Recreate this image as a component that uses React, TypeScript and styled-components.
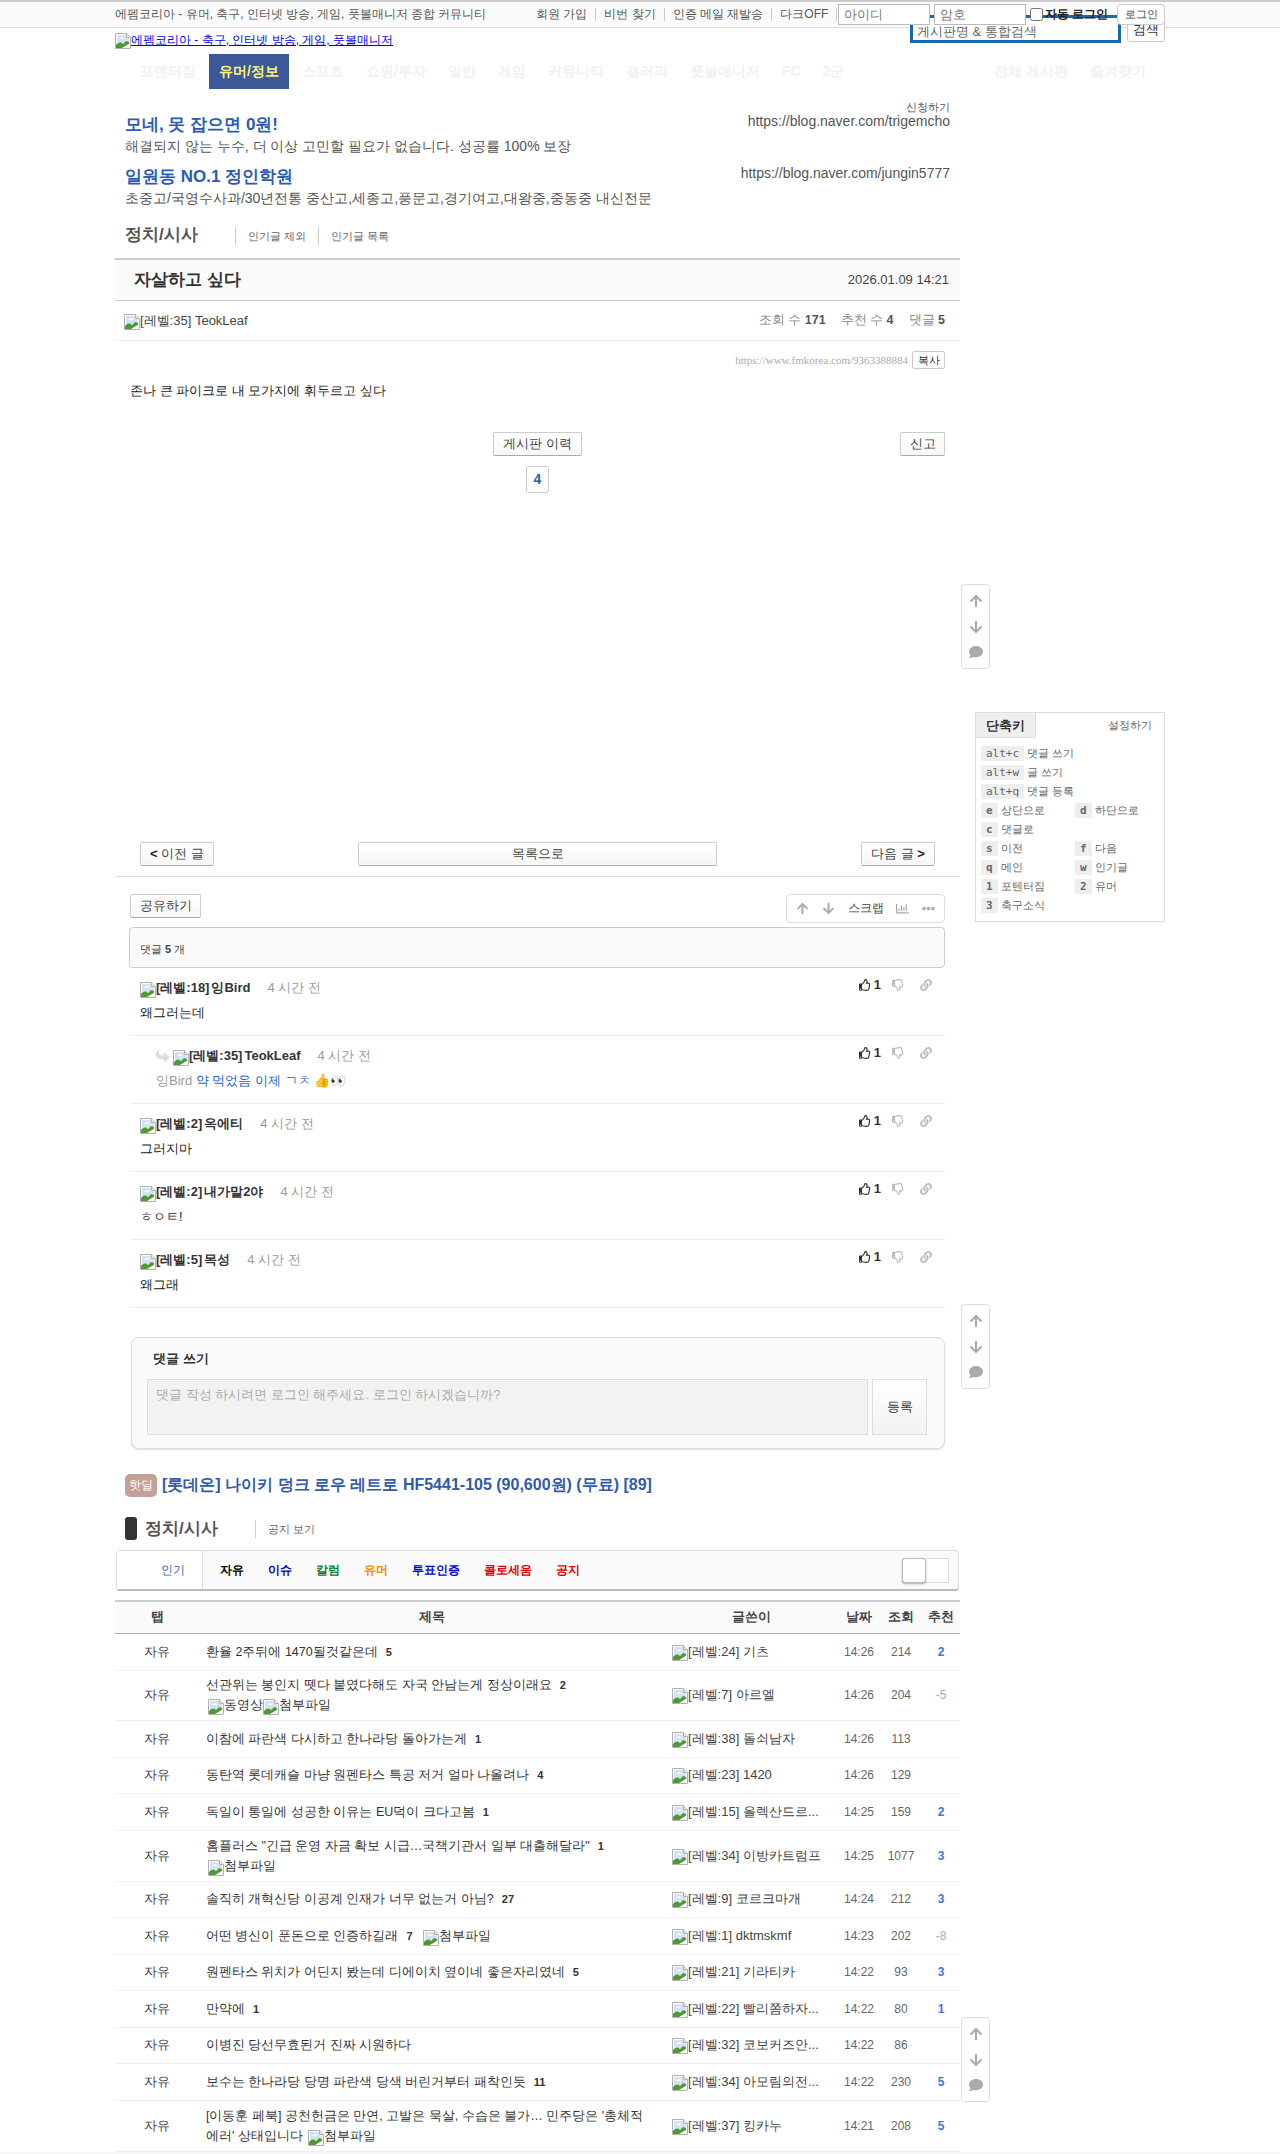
import React from "react";
import styled, { createGlobalStyle } from "styled-components";
import {
  FaArrowUp,
  FaArrowDown,
  FaComment,
  FaRegThumbsUp,
  FaRegThumbsDown,
  FaLink,
  FaRegChartBar,
  FaEllipsisH,
  FaShare,
} from "react-icons/fa";

const GlobalStyle = createGlobalStyle`
  html, body {
    margin: 0;
    padding: 0;
    background: #fff;
    font-family: "Liberation Sans", sans-serif;
    color: #333;
  }
  * { box-sizing: border-box; }
`;

// chrome style placeholder for images that did not load
const Missing = ({ label }: { label: string }) => (
  <MissingWrap>
    <svg width="16" height="16" viewBox="0 0 16 16">
      <path d="M.5 .5h11l4 4v11H.5z" fill="#fff" stroke="#b0b0b0" />
      <path d="M11.5 .5v4h4" fill="#e8e8e8" stroke="#b0b0b0" />
      <path d="M2 2h9v3h3v5H2z" fill="#d5e2f5" />
      <path d="M4 6l3-2 3 2z" fill="#fff" />
      <path d="M1 15v-3c3-3 5-3 7-1l3-3 3 1v2l-7 4z" fill="#4d9a35" />
      <path d="M8 15l6-4v4z" fill="#fff" />
    </svg>
    {label}
  </MissingWrap>
);

const navItems = ["스포츠", "쇼핑/투자", "일반", "게임", "커뮤니티", "갤러리", "풋볼매니저", "FC", "2군"];

const keysWide = [
  ["alt+c", "댓글 쓰기"],
  ["alt+w", "글 쓰기"],
  ["alt+q", "댓글 등록"],
];
const keysGrid = [
  ["e", "상단으로"],
  ["d", "하단으로"],
  ["c", "댓글로"],
  ["", ""],
  ["s", "이전"],
  ["f", "다음"],
  ["q", "메인"],
  ["w", "인기글"],
  ["1", "포텐터짐"],
  ["2", "유머"],
  ["3", "축구소식"],
];

const comments = [
  { level: "18", name: "잉Bird", text: "왜그러는데" },
  { level: "35", name: "TeokLeaf", reply: true, text: "약 먹었음 이제 ㄱㅊ 👍👀" },
  { level: "2", name: "옥에티", text: "그러지마" },
  { level: "2", name: "내가말2야", text: "ㅎㅇㅌ!" },
  { level: "5", name: "목성", text: "왜그래" },
];

const tabs = [
  ["자유", "#000"],
  ["이슈", "#0000c0"],
  ["칼럼", "#0a7d3c"],
  ["유머", "#f08c00"],
  ["투표인증", "#0000d8"],
  ["콜로세움", "#e00000"],
  ["공지", "#d80000"],
];

type Row = {
  title: string;
  count?: string;
  video?: boolean;
  file?: boolean;
  level: string;
  author: string;
  time: string;
  views: string;
  votes?: string;
  h: number;
};

const rows: Row[] = [
  { title: "환율 2주뒤에 1470될것같은데", count: "5", level: "24", author: "기츠", time: "14:26", views: "214", votes: "2", h: 37 },
  { title: "선관위는 봉인지 뗏다 붙였다해도 자국 안남는게 정상이래요", count: "2", video: true, file: true, level: "7", author: "아르엘", time: "14:26", views: "204", votes: "-5", h: 50 },
  { title: "이참에 파란색 다시하고 한나라당 돌아가는게", count: "1", level: "38", author: "돌쇠남자", time: "14:26", views: "113", h: 37 },
  { title: "동탄역 롯데캐슬 마냥 원펜타스 특공 저거 얼마 나올려나", count: "4", level: "23", author: "1420", time: "14:26", views: "129", h: 36 },
  { title: "독일이 통일에 성공한 이유는 EU덕이 크다고봄", count: "1", level: "15", author: "올렉산드르...", time: "14:25", views: "159", votes: "2", h: 37 },
  { title: "홈플러스 \"긴급 운영 자금 확보 시급…국책기관서 일부 대출해달라\"", count: "1", file: true, level: "34", author: "이방카트럼프", time: "14:25", views: "1077", votes: "3", h: 51 },
  { title: "솔직히 개혁신당 이공계 인재가 너무 없는거 아님?", count: "27", level: "9", author: "코르크마개", time: "14:24", views: "212", votes: "3", h: 36 },
  { title: "어떤 병신이 푼돈으로 인증하길래", count: "7", file: true, level: "1", author: "dktmskmf", time: "14:23", views: "202", votes: "-8", h: 37 },
  { title: "원펜타스 위치가 어딘지 봤는데 디에이치 옆이네 좋은자리였네", count: "5", level: "21", author: "기라티카", time: "14:22", views: "93", votes: "3", h: 36 },
  { title: "만약에", count: "1", level: "22", author: "빨리쫌하자...", time: "14:22", views: "80", votes: "1", h: 37 },
  { title: "이병진 당선무효된거 진짜 시원하다", level: "32", author: "코보커즈안...", time: "14:22", views: "86", h: 36 },
  { title: "보수는 한나라당 당명 파란색 당색 버린거부터 패착인듯", count: "11", level: "34", author: "아모림의전...", time: "14:22", views: "230", votes: "5", h: 37 },
  { title: "[이동훈 페북] 공천헌금은 만연, 고발은 묵살, 수습은 불가… 민주당은 '총체적 에러' 상태입니다", file: true, level: "37", author: "킹카누", time: "14:21", views: "208", votes: "5", h: 51 },
];

const ScrollWidget = ({ top }: { top: number }) => (
  <Floater $top={top}>
    <FaArrowUp />
    <FaArrowDown />
    <FaComment />
  </Floater>
);

const App = () => {
  return (
    <>
      <GlobalStyle />
      <TopBar>
        <SiteTag>에펨코리아 - 유머, 축구, 인터넷 방송, 게임, 풋볼매니저 종합 커뮤니티</SiteTag>
        <TopLinks>
          <li>회원 가입</li>
          <li>비번 찾기</li>
          <li>인증 메일 재발송</li>
          <li>다크OFF</li>
        </TopLinks>
        <LoginInput placeholder="아이디" />
        <LoginInput placeholder="암호" />
        <AutoLogin>
          <input type="checkbox" />
          자동 로그인
        </AutoLogin>
        <LoginButton>로그인</LoginButton>
      </TopBar>
      <SearchBox>
        <SearchField placeholder="게시판명 & 통합검색" />
        <SearchButton>검색</SearchButton>
      </SearchBox>

      <Page>
        <Logo>
          <Missing label="에펨코리아 - 축구, 인터넷 방송, 게임, 풋볼매니저" />
        </Logo>
        <Nav>
          <NavItem>포텐터짐</NavItem>
          <NavItem $active>유머/정보</NavItem>
          {navItems.map((n) => (
            <NavItem key={n}>{n}</NavItem>
          ))}
          <NavSpacer />
          <NavItem>전체 게시판</NavItem>
          <NavItem>즐겨찾기</NavItem>
        </Nav>

        <Columns>
          <Main>
            <AdBlock>
              <AdApply>신청하기</AdApply>
              <AdRow>
                <div>
                  <AdTitle>모네, 못 잡으면 0원!</AdTitle>
                  <AdDesc>해결되지 않는 누수, 더 이상 고민할 필요가 없습니다. 성공률 100% 보장</AdDesc>
                </div>
                <AdUrl>https://blog.naver.com/trigemcho</AdUrl>
              </AdRow>
              <AdRow>
                <div>
                  <AdTitle>일원동 NO.1 정인학원</AdTitle>
                  <AdDesc>초중고/국영수사과/30년전통 중산고,세종고,풍문고,경기여고,대왕중,중동중 내신전문</AdDesc>
                </div>
                <AdUrl>https://blog.naver.com/jungin5777</AdUrl>
              </AdRow>
            </AdBlock>

            <BoardHead>
              <BoardName>정치/시사</BoardName>
              <BoardLink>인기글 제외</BoardLink>
              <BoardLink>인기글 목록</BoardLink>
            </BoardHead>

            <PostTitle>
              <h1>자살하고 싶다</h1>
              <span>2026.01.09 14:21</span>
            </PostTitle>
            <PostMeta>
              <Missing label="[레벨:35] TeokLeaf" />
              <Stats>
                <span>
                  조회 수 <b>171</b>
                </span>
                <span>
                  추천 수 <b>4</b>
                </span>
                <span>
                  댓글 <b>5</b>
                </span>
              </Stats>
            </PostMeta>
            <UrlRow>
              <a>https://www.fmkorea.com/9363388884</a>
              <CopyButton>복사</CopyButton>
            </UrlRow>
            <PostBody>존나 큰 파이크로 내 모가지에 휘두르고 싶다</PostBody>
            <PostActions>
              <GrayButton>게시판 이력</GrayButton>
              <ReportButton>신고</ReportButton>
            </PostActions>
            <VoteBox>4</VoteBox>

            <PagerRow>
              <GrayButton $w={74}>
                <b>&lt;</b> 이전 글
              </GrayButton>
              <GrayButton $w={359}>목록으로</GrayButton>
              <GrayButton $w={74}>
                다음 글 <b>&gt;</b>
              </GrayButton>
            </PagerRow>

            <ShareRow>
              <GrayButton $w={71}>공유하기</GrayButton>
              <ToolBox>
                <FaArrowUp />
                <FaArrowDown />
                <span>스크랩</span>
                <FaRegChartBar />
                <FaEllipsisH />
              </ToolBox>
            </ShareRow>
            <CommentCount>
              댓글 <b>5</b> 개
            </CommentCount>

            {comments.map((c, i) => (
              <CommentRow key={i} $reply={c.reply}>
                <div>
                  <CommentHead>
                    {c.reply && <ReplyIcon />}
                    <Missing label={`[레벨:${c.level}]`} /> {c.name}
                    <TimeAgo>4 시간 전</TimeAgo>
                  </CommentHead>
                  <CommentText>
                    {c.reply ? (
                      <>
                        <Mention>잉Bird</Mention> <ReplyBlue>{c.text}</ReplyBlue>
                      </>
                    ) : (
                      c.text
                    )}
                  </CommentText>
                </div>
                <CommentVotes>
                  <FaRegThumbsUp />
                  <b>1</b>
                  <DimIcon>
                    <FaRegThumbsDown />
                  </DimIcon>
                  <DimIcon>
                    <FaLink />
                  </DimIcon>
                </CommentVotes>
              </CommentRow>
            ))}

            <WriteBox>
              <WriteTitle>댓글 쓰기</WriteTitle>
              <WriteRow>
                <WriteArea placeholder="댓글 작성 하시려면 로그인 해주세요. 로그인 하시겠습니까?" readOnly />
                <SubmitButton>등록</SubmitButton>
              </WriteRow>
            </WriteBox>

            <HotDeal>
              <HotBadge>핫딜</HotBadge>
              <a>[롯데온] 나이키 덩크 로우 레트로 HF5441-105 (90,600원) (무료) [89]</a>
            </HotDeal>

            <ListHead>
              <ListMark />
              <ListName>정치/시사</ListName>
              <BoardLink>공지 보기</BoardLink>
            </ListHead>

            <TabBar>
              <PopularTab>인기</PopularTab>
              <TabList>
                {tabs.map(([t, color]) => (
                  <Tab key={t} $color={color}>
                    {t}
                  </Tab>
                ))}
              </TabList>
              <Toggle>
                <i />
              </Toggle>
            </TabBar>

            <BoardTable>
              <colgroup>
                <col width="84" />
                <col width="466" />
                <col width="173" />
                <col width="42" />
                <col width="42" />
                <col width="38" />
              </colgroup>
              <thead>
                <tr>
                  <th>탭</th>
                  <th>제목</th>
                  <th>글쓴이</th>
                  <th>날짜</th>
                  <th>조회</th>
                  <th>추천</th>
                </tr>
              </thead>
              <tbody>
                {rows.map((r, i) => (
                  <BoardRow key={i} $h={r.h}>
                    <td>자유</td>
                    <TitleCell>
                      {r.title}
                      {r.count && <ReplyCount>{r.count}</ReplyCount>}{" "}
                      {(r.video || r.file) && (
                        <Attachments>
                          {r.video && <Missing label="동영상" />}
                          {r.file && <Missing label="첨부파일" />}
                        </Attachments>
                      )}
                    </TitleCell>
                    <AuthorCell>
                      <Missing label={`[레벨:${r.level}]`} /> {r.author}
                    </AuthorCell>
                    <td>{r.time}</td>
                    <td>{r.views}</td>
                    <VoteCell $minus={(r.votes || "").startsWith("-")}>{r.votes}</VoteCell>
                  </BoardRow>
                ))}
              </tbody>
            </BoardTable>
          </Main>

          <Side>
            <ScrollWidget top={495} />
            <ShortcutPanel>
              <ShortcutHead>
                <strong>단축키</strong>
                <span>설정하기</span>
              </ShortcutHead>
              <ShortcutBody>
                {keysWide.map(([k, label]) => (
                  <KeyLine key={k}>
                    <Kbd $plain>{k}</Kbd>
                    {label}
                  </KeyLine>
                ))}
                <KeyGrid>
                  {keysGrid.map(([k, label], i) => (
                    <KeyLine key={i}>
                      {k && <Kbd>{k}</Kbd>}
                      {label}
                    </KeyLine>
                  ))}
                </KeyGrid>
              </ShortcutBody>
            </ShortcutPanel>
            <ScrollWidget top={382} />
            <ScrollWidget top={628} />
          </Side>
        </Columns>
      </Page>
      <PageEnd />
    </>
  );
};

export default App;

const MissingWrap = styled.span`
  display: inline-block;
  white-space: nowrap;
  svg {
    vertical-align: bottom;
  }
`;

const TopBar = styled.div`
  height: 28px;
  display: flex;
  align-items: center;
  padding-left: 115px;
  background: #fafafa;
  border-top: 2px solid #ccc;
  border-bottom: 1px solid #ddd;
  font-size: 12px;
  color: #555;
`;

const SiteTag = styled.div`
  width: 421px;
  white-space: nowrap;
`;

const TopLinks = styled.ul`
  display: flex;
  list-style: none;
  margin: 0;
  padding: 0;
  width: 302px;
  color: #555;
  white-space: nowrap;
  li {
    padding-right: 8px;
    margin-right: 8px;
    border-right: 1px solid #ccc;
    line-height: 13px;
  }
`;

const LoginInput = styled.input`
  position: relative;
  z-index: 2;
  width: 92px;
  height: 21px;
  margin-right: 4px;
  padding: 0 5px;
  border: 1px solid #bbb;
  background: #fff;
  font: 13px "Liberation Sans", sans-serif;
  outline: none;
  &::placeholder {
    color: #777;
  }
`;

const AutoLogin = styled.label`
  position: relative;
  z-index: 2;
  display: flex;
  align-items: center;
  width: 87px;
  font-weight: bold;
  color: #222;
  white-space: nowrap;
  input {
    margin: 0 2px 0 0;
  }
`;

const LoginButton = styled.button`
  position: relative;
  z-index: 2;
  width: 48px;
  height: 21px;
  padding: 0;
  border: 1px solid #ccc;
  border-radius: 4px;
  background: #fff;
  font: 11px "Liberation Sans", sans-serif;
  color: #444;
`;

const SearchBox = styled.div`
  position: absolute;
  z-index: 1;
  top: 15px;
  left: 910px;
  display: flex;
`;

const SearchField = styled.input`
  width: 211px;
  height: 28px;
  padding: 4px 4px 0;
  border: 3px solid #1c64b4;
  font: 13px "Liberation Sans", sans-serif;
  outline: none;
  &::placeholder {
    color: #666;
  }
`;

const SearchButton = styled.button`
  width: 38px;
  height: 27px;
  margin-left: 6px;
  padding: 3px 0 0;
  border: 1px solid #ccc;
  border-radius: 3px;
  background: #fff;
  font: 13px "Liberation Sans", sans-serif;
  color: #333;
`;

const Page = styled.div`
  width: 1165px;
  margin-left: 115px;
`;

const Logo = styled.a`
  display: block;
  height: 26px;
  padding-top: 4px;
  font-size: 12px;
  color: #0000ee;
  span {
    text-decoration: underline;
  }
`;

const Nav = styled.div`
  width: 1042px;
  height: 35px;
  display: flex;
  padding-left: 14px;
`;

const NavItem = styled.div<{ $active?: boolean }>`
  height: 35px;
  line-height: 35px;
  padding: 0 ${(p) => (p.$active ? "10px" : "11px")};
  margin: 0 ${(p) => (p.$active ? "2px" : "0")};
  font-size: 14px;
  font-weight: bold;
  white-space: nowrap;
  background: ${(p) => (p.$active ? "#3b5998" : "transparent")};
  color: ${(p) => (p.$active ? "#fff176" : "#f1f1f1")};
`;

const NavSpacer = styled.div`
  flex: 1;
`;

const Columns = styled.div`
  display: flex;
  align-items: flex-start;
`;

const Main = styled.div`
  width: 845px;
  flex: none;
`;

const Side = styled.div`
  width: 205px;
  flex: none;
`;

const Floater = styled.div<{ $top: number }>`
  width: 29px;
  height: 85px;
  margin: ${(p) => p.$top}px 0 0 1px;
  padding: 9px 0;
  display: flex;
  flex-direction: column;
  align-items: center;
  justify-content: space-between;
  background: #fff;
  border: 1px solid #ddd;
  border-radius: 4px;
  color: #aaa;
  font-size: 14px;
`;

const ShortcutPanel = styled.div`
  width: 190px;
  height: 210px;
  margin: 43px 0 0 15px;
  border: 1px solid #ddd;
  font-size: 11px;
  color: #666;
`;

const ShortcutHead = styled.div`
  display: flex;
  justify-content: space-between;
  align-items: center;
  height: 25px;
  padding-right: 12px;
  strong {
    display: block;
    width: 60px;
    height: 25px;
    line-height: 25px;
    text-align: center;
    background: #eee;
    border-right: 1px solid #ddd;
    border-bottom: 1px solid #ddd;
    font-size: 13px;
    color: #333;
  }
`;

const ShortcutBody = styled.div`
  padding: 6px 5px 0;
`;

const KeyLine = styled.div`
  height: 19px;
  display: flex;
  align-items: center;
  white-space: nowrap;
`;

const Kbd = styled.kbd<{ $plain?: boolean }>`
  margin-right: 3px;
  padding: 0 5px;
  height: 15px;
  background: #eee;
  font: ${(p) => (p.$plain ? "normal" : "bold")} 11px/15px "DejaVu Sans Mono", monospace;
  color: #666;
`;

const KeyGrid = styled.div`
  display: grid;
  grid-template-columns: 94px 1fr;
`;

const AdBlock = styled.div`
  height: 121px;
  padding-top: 12px;
  padding-right: 10px;
`;

const AdApply = styled.div`
  text-align: right;
  font-size: 11px;
  line-height: 12px;
  color: #555;
  margin-bottom: 1px;
`;

const AdRow = styled.div`
  display: flex;
  justify-content: space-between;
  margin-bottom: 8px;
  padding-left: 10px;
`;

const AdTitle = styled.div`
  height: 20px;
  padding-top: 1px;
  font-size: 17px;
  line-height: 20px;
  font-weight: bold;
  color: #2b5bb5;
`;

const AdDesc = styled.div`
  font-size: 14px;
  line-height: 24px;
  color: #555;
`;

const AdUrl = styled.div`
  font-size: 14px;
  line-height: 14px;
  color: #555;
`;

const BoardHead = styled.div`
  height: 50px;
  display: flex;
  align-items: center;
  padding: 0 0 0 10px;
  border-bottom: 2px solid #ccc;
`;

const BoardName = styled.div`
  width: 110px;
  font-size: 17px;
  color: #555;
  font-weight: bold;
`;

const BoardLink = styled.div`
  margin-top: 4px;
  padding: 0 12px;
  height: 18px;
  line-height: 18px;
  border-left: 1px solid #ccc;
  font-size: 11px;
  color: #666;
`;

const PostTitle = styled.div`
  height: 41px;
  padding: 0 11px 2px 19px;
  display: flex;
  justify-content: space-between;
  align-items: center;
  background: #fafafa;
  border-bottom: 1px solid #ccc;
  h1 {
    margin: 0;
    font-size: 17px;
    color: #333;
  }
  span {
    font-size: 13px;
    color: #444;
  }
`;

const PostMeta = styled.div`
  height: 40px;
  display: flex;
  justify-content: space-between;
  align-items: center;
  padding: 0 15px 0 9px;
  border-bottom: 1px solid #eee;
  font-size: 13px;
  color: #444;
`;

const Stats = styled.div`
  display: flex;
  gap: 15px;
  font-size: 12.5px;
  color: #888;
  b {
    color: #555;
  }
`;

const UrlRow = styled.div`
  height: 38px;
  display: flex;
  justify-content: flex-end;
  align-items: center;
  gap: 4px;
  padding-right: 15px;
  font: 11px "Liberation Serif", serif;
  color: #aaa;
`;

const CopyButton = styled.button`
  width: 33px;
  height: 18px;
  padding: 0;
  background: #fff;
  border: 1px solid #ccc;
  border-radius: 2px;
  font: 11px "Liberation Sans", sans-serif;
  color: #333;
`;

const PostBody = styled.div`
  padding-left: 15px;
  height: 53px;
  line-height: 24px;
  padding-top: 0;
  font-size: 13px;
  color: #222;
`;

const PostActions = styled.div`
  position: relative;
  display: flex;
  justify-content: center;
  height: 34px;
`;

const GrayButton = styled.button<{ $w?: number }>`
  width: ${(p) => (p.$w ? `${p.$w}px` : "89px")};
  height: 24px;
  padding: 0;
  background: linear-gradient(#fff, #f6f6f6);
  border: 1px solid #ccc;
  border-bottom-color: #aaa;
  border-radius: 2px;
  font: 13px "Liberation Sans", sans-serif;
  color: #444;
  b {
    color: #222;
  }
`;

const ReportButton = styled(GrayButton)`
  position: absolute;
  right: 15px;
  top: 0;
  width: 45px;
`;

const VoteBox = styled.div`
  width: 23px;
  height: 27px;
  margin: 0 auto;
  line-height: 25px;
  text-align: center;
  border: 1px solid #ccc;
  border-radius: 3px;
  font-size: 14px;
  font-weight: bold;
  color: #2a62b0;
`;

const PagerRow = styled.div`
  display: flex;
  justify-content: space-between;
  height: 35px;
  margin: 349px 0 0;
  padding: 0 25px;
  border-bottom: 1px solid #ddd;
`;

const ShareRow = styled.div`
  display: flex;
  justify-content: space-between;
  align-items: flex-start;
  height: 50px;
  padding: 17px 15px 0;
`;

const ToolBox = styled.div`
  width: 159px;
  height: 29px;
  display: flex;
  align-items: center;
  justify-content: space-between;
  padding: 0 9px;
  border: 1px solid #ddd;
  border-radius: 4px;
  font-size: 12px;
  color: #444;
  svg {
    color: #aaa;
    font-size: 13px;
  }
`;

const CommentCount = styled.div`
  height: 41px;
  margin: 0 15px 0 14px;
  padding: 0 10px;
  line-height: 42px;
  background: #fafafa;
  border: 1px solid #ccc;
  border-radius: 4px;
  font-size: 11px;
  color: #444;
`;

const CommentRow = styled.div<{ $reply?: boolean }>`
  height: 68px;
  margin: 0 15px;
  padding: 10px 13px 0 ${(p) => (p.$reply ? "26px" : "10px")};
  display: flex;
  justify-content: space-between;
  border-bottom: 1px solid #eee;
`;

const CommentHead = styled.div`
  height: 20px;
  line-height: 20px;
  font-size: 13px;
  font-weight: bold;
  color: #333;
  display: flex;
  align-items: center;
  gap: 2px;
`;

const ReplyIcon = styled(FaShare)`
  transform: scaleY(-1);
  color: #ddd;
  font-size: 14px;
  margin-right: 1px;
`;

const TimeAgo = styled.span`
  margin-left: 15px;
  font-weight: normal;
  color: #999;
`;

const CommentText = styled.div`
  margin-top: 5px;
  line-height: 20px;
  font-size: 13px;
  color: #222;
`;

const Mention = styled.span`
  color: #999;
`;

const ReplyBlue = styled.span`
  color: #2a62c8;
`;

const CommentVotes = styled.div`
  display: flex;
  align-items: center;
  height: 13px;
  font-size: 12px;
  color: #333;
  b {
    margin: 0 11px 0 3px;
    font-size: 13px;
  }
`;

const DimIcon = styled.span`
  color: #bbb;
  margin-right: 16px;
  display: flex;
  &:last-child {
    margin-right: 0;
  }
`;

const WriteBox = styled.div`
  height: 112px;
  margin: 29px 15px 0 16px;
  padding: 12px 17px 0 15px;
  background: #fafafa;
  border: 1px solid #ddd;
  border-radius: 8px;
  box-shadow: 0 1px 1px #ddd;
`;

const WriteTitle = styled.div`
  padding-left: 6px;
  font-size: 13px;
  line-height: 18px;
  font-weight: bold;
  color: #333;
`;

const WriteRow = styled.div`
  display: flex;
  gap: 4px;
  margin-top: 11px;
`;

const WriteArea = styled.textarea`
  width: 721px;
  height: 56px;
  padding: 6px 8px;
  resize: none;
  background: #f2f2f2;
  border: 1px solid #ddd;
  font: 13px "Liberation Sans", sans-serif;
  outline: none;
  &::placeholder {
    color: #aaa;
  }
`;

const SubmitButton = styled.button`
  width: 55px;
  height: 56px;
  padding: 0;
  background: linear-gradient(#fff, #f2f2f2);
  border: 1px solid #ddd;
  font: 13px "Liberation Sans", sans-serif;
  color: #333;
`;

const HotDeal = styled.div`
  display: flex;
  align-items: center;
  gap: 5px;
  margin: 25px 0 0 10px;
  height: 23px;
  font-size: 16px;
  font-weight: bold;
  color: #2f5ba8;
`;

const HotBadge = styled.span`
  width: 32px;
  height: 23px;
  line-height: 23px;
  text-align: center;
  border-radius: 5px;
  background: #c4a097;
  font-size: 12px;
  font-weight: normal;
  color: #fff;
`;

const ListHead = styled.div`
  display: flex;
  align-items: center;
  margin: 20px 0 0 10px;
  height: 23px;
  ${BoardLink} {
    margin-top: 0;
  }
`;

const ListMark = styled.div`
  width: 12px;
  height: 23px;
  border-radius: 3px;
  background: #333;
  margin-right: 8px;
`;

const ListName = styled.div`
  width: 110px;
  font-size: 17px;
  font-weight: bold;
  color: #555;
`;

const TabBar = styled.div`
  width: 843px;
  height: 41px;
  margin: 10px 0 0 1px;
  display: flex;
  align-items: stretch;
  border: 1px solid #ddd;
  border-bottom: 2px solid #bbb;
  border-radius: 4px;
  background: #fafafa;
  font-size: 12px;
  font-weight: bold;
`;

const PopularTab = styled.div`
  width: 86px;
  padding-left: 44px;
  line-height: 38px;
  background: #fff;
  border-right: 1px solid #ddd;
  color: #2f62b5;
  font-weight: normal;
`;

const TabList = styled.div`
  flex: 1;
  display: flex;
  gap: 24px;
  padding-left: 17px;
  line-height: 38px;
`;

const Tab = styled.div<{ $color: string }>`
  color: ${(p) => p.$color};
`;

const Toggle = styled.div`
  position: relative;
  width: 47px;
  height: 25px;
  margin: 7px 9px 0 0;
  border: 1px solid #ddd;
  background: #fff;
  i {
    position: absolute;
    left: -1px;
    top: -1px;
    width: 24px;
    height: 25px;
    border: 1px solid #bbb;
    border-radius: 3px;
    background: #fff;
    box-shadow: 0 1px 2px #aaa;
  }
`;

const BoardTable = styled.table`
  width: 845px;
  margin-top: 9px;
  table-layout: fixed;
  border-collapse: collapse;
  font-size: 12px;
  color: #666;
  th {
    height: 32px;
    padding: 0;
    background: #fafafa;
    border-top: 2px solid #ccc;
    border-bottom: 1px solid #aaa;
    font-size: 13px;
    font-weight: bold;
    color: #444;
  }
`;

const BoardRow = styled.tr<{ $h: number }>`
  height: ${(p) => p.$h}px;
  border-bottom: 1px solid #eee;
  td {
    padding: 0;
    text-align: center;
    white-space: nowrap;
  }
  td:first-child {
    font-size: 13px;
    color: #444;
  }
`;

const TitleCell = styled.td`
  && {
    padding: 0 0 0 7px;
    text-align: left;
    white-space: normal;
    word-break: keep-all;
    line-height: 20px;
    color: #333;
    font-size: 12.5px;
  }
`;

const Attachments = styled.span`
  display: inline-block;
  white-space: nowrap;
  margin: 0 0 0 2px;
`;

const ReplyCount = styled.span`
  margin: 0 5px 0 8px;
  font-size: 11px;
  font-weight: bold;
  color: #333;
`;

const AuthorCell = styled.td`
  && {
    padding-left: 7px;
    text-align: left;
    font-size: 13px;
    color: #444;
  }
`;

const VoteCell = styled.td<{ $minus?: boolean }>`
  && {
    font-weight: ${(p) => (p.$minus ? "normal" : "bold")};
    color: ${(p) => (p.$minus ? "#aaa" : "#3b78d8")};
  }
`;

const PageEnd = styled.div`
  height: 6px;
  background: #f8f8f8;
`;
